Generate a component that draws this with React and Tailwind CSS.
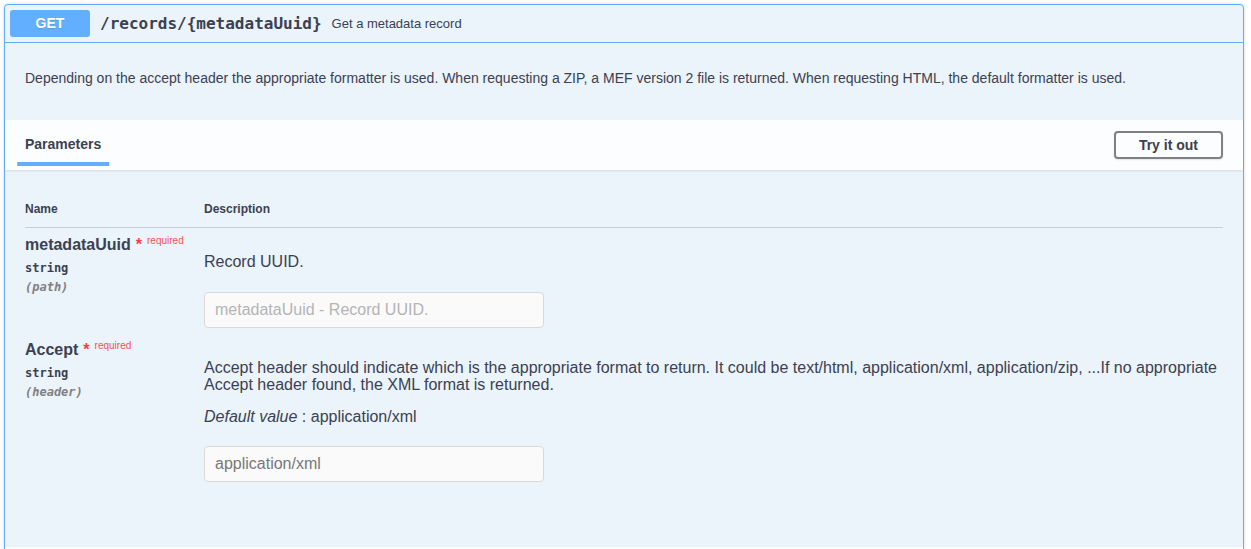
import { useState } from "react";

const params = [
  {
    name: "metadataUuid",
    type: "string",
    location: "(path)",
    description: "Record UUID.",
    placeholder: "metadataUuid - Record UUID.",
    value: "",
  },
  {
    name: "Accept",
    type: "string",
    location: "(header)",
    description:
      "Accept header should indicate which is the appropriate format to return. It could be text/html, application/xml, application/zip, ...If no appropriate Accept header found, the XML format is returned.",
    defaultValue: "application/xml",
    placeholder: "",
    value: "application/xml",
  },
];

const mono = "font-['DejaVu_Sans_Mono',monospace]";

function ParamRow({ p, first }) {
  return (
    <div className={`flex ${first ? "pt-[7px]" : "pt-[12px]"}`}>
      {/* Name */}
      <div className="w-[179px] shrink-0">
        <div className="text-[16px] font-bold leading-[20px]">
          {p.name}
          <span className="ml-[5px] text-[#f93e3e]">*</span>
          <span className="relative -top-[6px] pl-[5px] text-[10px] font-normal text-[#ff0000]/70">
            required
          </span>
        </div>
        <div className={`${mono} mt-[2px] text-[12px] font-bold leading-[19px]`}>{p.type}</div>
        <div className={`${mono} text-[12px] font-bold italic leading-[19px] text-[#808080]`}>
          {p.location}
        </div>
      </div>

      {/* Description */}
      <div className="flex-1">
        {p.defaultValue ? (
          <>
            <p className="pt-[19px] text-[16px] leading-[17px]">{p.description}</p>
            <p className="mt-[14px] text-[16px] leading-[20px]">
              <i>Default value</i> : {p.defaultValue}
            </p>
          </>
        ) : (
          <p className="pt-[17px] text-[16px] leading-[20px]">{p.description}</p>
        )}
        <input
          type="text"
          disabled
          defaultValue={p.value}
          placeholder={p.placeholder}
          className={`${p.defaultValue ? "mt-[19px]" : "mt-[20px]"} block h-[36px] w-[340px] rounded border border-[#d9d9d9] bg-[#fafafa] px-[10px] text-[16px] text-[#787878] placeholder:text-[#b4b4b4]`}
        />
      </div>
    </div>
  );
}

export default function App() {
  const [tryOut, setTryOut] = useState(false);

  return (
    <div className="h-[549px] overflow-hidden bg-white px-1 pt-1 font-['Liberation_Sans',Arial,sans-serif] text-[#3b4151]">
      <div className="w-[1240px] rounded border border-[#61affe] bg-[#ebf3fb] shadow-[0_0_3px_rgba(0,0,0,0.19)]">
        {/* Summary */}
        <div className="flex items-center border-b border-[#61affe] p-[5px]">
          <span className="flex h-[27px] w-20 items-center justify-center rounded-[3px] bg-[#61affe] text-[14px] font-bold text-white [text-shadow:0_1px_0_rgba(0,0,0,0.1)]">
            GET
          </span>
          <span className={`${mono} px-[10px] text-[16px] font-bold`}>
            /records/{"{metadataUuid}"}
          </span>
          <span className="text-[13px]">Get a metadata record</span>
        </div>

        {/* Description */}
        <div className="px-5 pb-[32px] pt-[25px]">
          <p className="text-[14px] leading-[20px]">
            Depending on the accept header the appropriate formatter is used. When requesting a ZIP, a MEF version 2 file is returned. When requesting HTML, the default formatter is used.
          </p>
        </div>

        {/* Parameters header */}
        <div className="flex h-[50px] items-center justify-between bg-white/80 px-5 shadow-[0_1px_2px_rgba(0,0,0,0.1)]">
          <span className="relative -top-[1px] text-[14px] font-bold leading-[20px]">
            Parameters
            <span className="absolute left-1/2 top-[28px] h-1 w-[120%] -translate-x-1/2 bg-[#61affe]" />
          </span>
          <button
            onClick={() => setTryOut(!tryOut)}
            className="rounded border-2 border-[#808080] px-[23px] py-[5px] text-[14px] font-bold leading-[14px] shadow-[0_1px_2px_rgba(0,0,0,0.1)]"
          >
            {tryOut ? "Cancel" : "Try it out"}
          </button>
        </div>

        {/* Table */}
        <div className="px-5 pt-[21px]">
          <div className="flex border-b border-[#3b4151]/20 py-3 text-[12px] font-bold leading-[12px]">
            <div className="w-[179px]">Name</div>
            <div>Description</div>
          </div>
          {params.map((p, i) => (
            <ParamRow key={p.name} p={p} first={i === 0} />
          ))}
          <div className="h-[65px]" />
        </div>

        {/* Responses section header, starts at the fold */}
        <div className="h-[50px] bg-white/80 shadow-[0_1px_2px_rgba(0,0,0,0.1)]" />
      </div>
    </div>
  );
}
